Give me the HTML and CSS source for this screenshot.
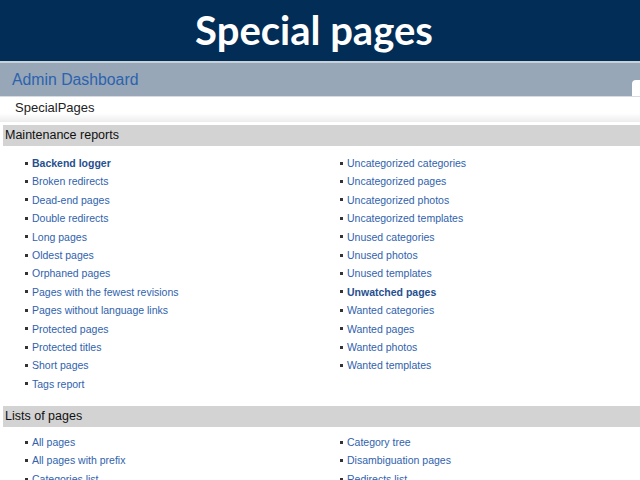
FILE: index.html
```html
<!DOCTYPE html>
<html>
<head>
<meta charset="utf-8">
<link rel="stylesheet" href="styles.css">
</head>
<body>
<header class="slide-title">Special pages</header>
<div class="admin-bar">
  <span class="admin-link">Admin Dashboard</span>
  <span class="admin-tab"></span>
</div>
<div class="page-tab">SpecialPages</div>
<section class="group">
  <h2 class="group-head">Maintenance reports</h2>
  <div class="cols">
    <ul class="links">
      <li><a class="strong">Backend logger</a></li>
      <li><a>Broken redirects</a></li>
      <li><a>Dead-end pages</a></li>
      <li><a>Double redirects</a></li>
      <li><a>Long pages</a></li>
      <li><a>Oldest pages</a></li>
      <li><a>Orphaned pages</a></li>
      <li><a>Pages with the fewest revisions</a></li>
      <li><a>Pages without language links</a></li>
      <li><a>Protected pages</a></li>
      <li><a>Protected titles</a></li>
      <li><a>Short pages</a></li>
      <li><a>Tags report</a></li>
    </ul>
    <ul class="links">
      <li><a>Uncategorized categories</a></li>
      <li><a>Uncategorized pages</a></li>
      <li><a>Uncategorized photos</a></li>
      <li><a>Uncategorized templates</a></li>
      <li><a>Unused categories</a></li>
      <li><a>Unused photos</a></li>
      <li><a>Unused templates</a></li>
      <li><a class="strong">Unwatched pages</a></li>
      <li><a>Wanted categories</a></li>
      <li><a>Wanted pages</a></li>
      <li><a>Wanted photos</a></li>
      <li><a>Wanted templates</a></li>
    </ul>
  </div>
</section>
<section class="group group-lists">
  <h2 class="group-head">Lists of pages</h2>
  <div class="cols">
    <ul class="links">
      <li><a>All pages</a></li>
      <li><a>All pages with prefix</a></li>
      <li><a>Categories list</a></li>
    </ul>
    <ul class="links">
      <li><a>Category tree</a></li>
      <li><a>Disambiguation pages</a></li>
      <li><a>Redirects list</a></li>
    </ul>
  </div>
</section>
</body>
</html>
```
FILE: styles.css
```css
html, body {
  margin: 0;
  padding: 0;
  width: 640px;
  height: 480px;
  overflow: hidden;
  background: #ffffff;
  font-family: "Liberation Sans", Arial, sans-serif;
}
.slide-title {
  display: block;
  height: 61px;
  background: #022d57;
  color: #ffffff;
  font-family: Lato, "Open Sans", sans-serif;
  font-weight: 700;
  font-size: 40px;
  line-height: 61px;
  text-align: center;
  padding-right: 12px;
  border-bottom: 2px solid #c9d1d9;
}
.admin-bar {
  height: 33px;
  background: #97a7b7;
  display: flex;
  align-items: stretch;
  justify-content: space-between;
  border-bottom: 1px solid #d6dce2;
}
.admin-link {
  color: #2c62ae;
  font-size: 15.8px;
  line-height: 33px;
  padding-left: 12px;
}
.admin-tab {
  align-self: flex-end;
  width: 8px;
  height: 16px;
  background: #ffffff;
  border-top-left-radius: 4px;
}
.page-tab {
  height: 25px;
  line-height: 22px;
  padding-left: 15px;
  font-size: 13px;
  color: #222222;
  background: linear-gradient(#ffffff 0%, #ffffff 65%, #ececec 100%);
}
.group {
  margin-top: 3px;
}
.group + .group {
  margin-top: 13px;
}
.group-head {
  margin: 0 0 0 3px;
  height: 21px;
  line-height: 21px;
  background: #d3d3d3;
  font-size: 12.5px;
  font-weight: 400;
  color: #111111;
  padding-left: 2px;
}
.cols {
  display: grid;
  grid-template-columns: 315px 1fr;
  padding: 8px 0 0 25px;
}
.group-lists .cols {
  padding-top: 6px;
}
.links {
  list-style: none;
  margin: 0;
  padding: 0;
}
.links li {
  height: 18.4px;
  line-height: 18.4px;
  font-size: 10.5px;
  display: flex;
  align-items: center;
  gap: 4px;
}
.links li::before {
  content: "";
  width: 3px;
  height: 3px;
  background: #333333;
  flex: none;
}
.links a {
  color: #2f62ad;
  text-decoration: none;
}
.links a.strong {
  font-weight: 700;
  color: #264f8f;
}
```
